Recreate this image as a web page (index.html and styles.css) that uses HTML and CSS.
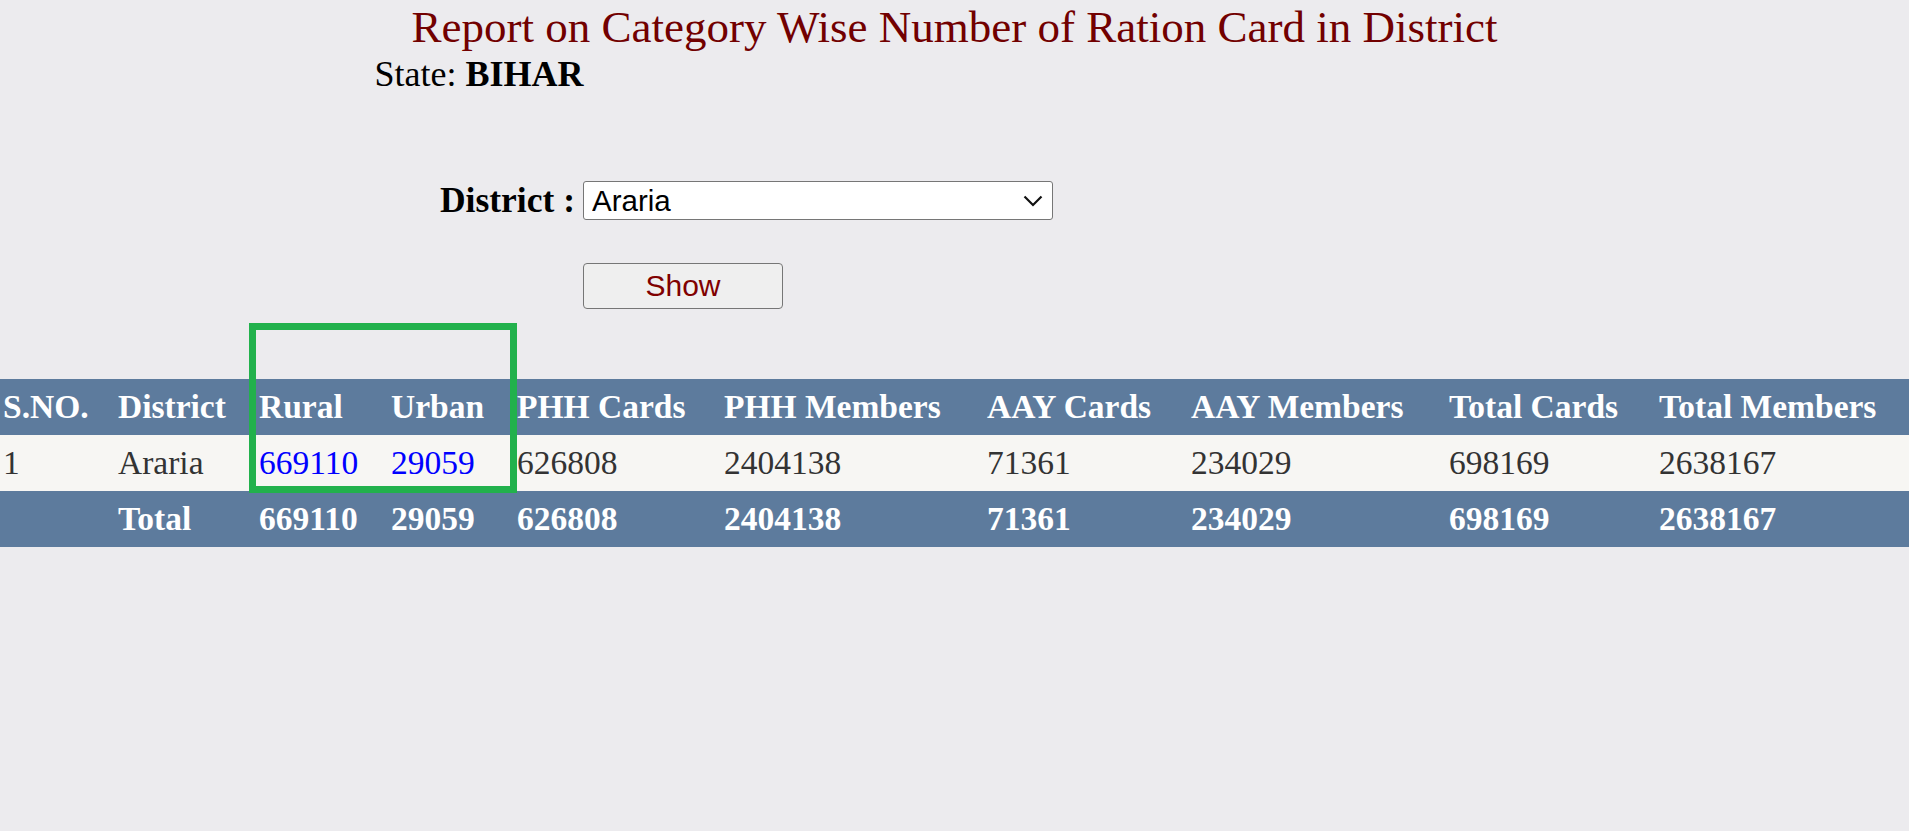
FILE: index.html
```html
<!DOCTYPE html>
<html>
<head>
<meta charset="utf-8">
<title>Report on Category Wise Number of Ration Card in District</title>
<link rel="stylesheet" href="styles.css">
</head>
<body>
<div class="head">
  <h1 class="title">Report on Category Wise Number of Ration Card in District</h1>
  <div class="state">State: <b>BIHAR</b></div>
</div>

<div class="form">
  <label class="label" for="district">District :</label>
  <div class="select-wrap">
    <select id="district" class="select">
      <option>Araria</option>
    </select>
    <svg class="chev" width="20" height="12" viewBox="0 0 20 12"><path d="M1.5 1.5 L10 10 L18.5 1.5" fill="none" stroke="#111" stroke-width="2.2"/></svg>
  </div>
  <span></span>
  <button class="btn" type="button">Show</button>
</div>

<div class="report">
  <table class="grid">
    <colgroup>
      <col class="c1"><col class="c2"><col class="c3"><col class="c4"><col class="c5">
      <col class="c6"><col class="c7"><col class="c8"><col class="c9"><col class="c10">
    </colgroup>
    <thead>
      <tr class="hdr">
        <th>S.NO.</th><th>District</th><th>Rural</th><th>Urban</th><th>PHH Cards</th>
        <th>PHH Members</th><th>AAY Cards</th><th>AAY Members</th><th>Total Cards</th><th>Total Members</th>
      </tr>
    </thead>
    <tbody>
      <tr class="row">
        <td>1</td><td>Araria</td><td><a href="#">669110</a></td><td><a href="#">29059</a></td><td>626808</td>
        <td>2404138</td><td>71361</td><td>234029</td><td>698169</td><td>2638167</td>
      </tr>
    </tbody>
    <tfoot>
      <tr class="ftr">
        <td></td><td>Total</td><td>669110</td><td>29059</td><td>626808</td>
        <td>2404138</td><td>71361</td><td>234029</td><td>698169</td><td>2638167</td>
      </tr>
    </tfoot>
  </table>
  <div class="mark"></div>
</div>
</body>
</html>
```

FILE: styles.css
```css
html, body {
  margin: 0;
  padding: 0;
}
body {
  background: #ecebee;
  font-family: "Liberation Serif", "Times New Roman", serif;
  color: #000;
  width: 1909px;
  min-height: 831px;
}
.head {
  width: 1160px;
  margin: 0 auto;
}
.title {
  margin: 0;
  padding-top: 1.5px;
  font-size: 45px;
  line-height: 50px;
  font-weight: normal;
  color: #720000;
  text-align: center;
}
.state {
  margin-top: 2px;
  font-size: 36px;
  line-height: 40px;
}
.form {
  display: grid;
  grid-template-columns: 575px 470px;
  column-gap: 8px;
  row-gap: 43px;
  margin-top: 87.5px;
  align-items: center;
}
.label {
  text-align: right;
  font-size: 35.5px;
  line-height: 39px;
  font-weight: bold;
}
.select-wrap {
  position: relative;
  height: 39px;
}
.select {
  -webkit-appearance: none;
  appearance: none;
  width: 470px;
  height: 39px;
  box-sizing: border-box;
  margin: 0;
  padding: 0 0 0 8px;
  background: #fff;
  border: 1.5px solid #767676;
  border-radius: 3px;
  font-family: "Liberation Sans", Arial, sans-serif;
  font-size: 29.5px;
  color: #000;
}
.chev {
  position: absolute;
  left: 440px;
  top: 14px;
  pointer-events: none;
}
.btn {
  width: 200px;
  height: 46px;
  box-sizing: border-box;
  margin: 0;
  padding: 0;
  background: #efefef;
  border: 1.5px solid #767676;
  border-radius: 4px;
  font-family: "Liberation Sans", Arial, sans-serif;
  font-size: 30px;
  color: #800000;
}
.report {
  position: relative;
  margin-top: 70px;
}
.grid {
  width: 1909px;
  border-collapse: collapse;
  table-layout: fixed;
  font-size: 33.5px;
}
.c1 { width: 115px; }
.c2 { width: 141px; }
.c3 { width: 132px; }
.c4 { width: 126px; }
.c5 { width: 207px; }
.c6 { width: 263px; }
.c7 { width: 204px; }
.c8 { width: 258px; }
.c9 { width: 210px; }
.c10 { width: 253px; }
.grid th, .grid td {
  height: 56px;
  padding: 0 0 0 3px;
  text-align: left;
  vertical-align: middle;
  white-space: nowrap;
}
.hdr, .ftr {
  background: #5d7b9d;
  color: #fff;
  font-weight: bold;
}
.row {
  background: #f7f6f3;
  color: #333;
}
.row a {
  color: #0000ff;
  text-decoration: none;
}
.mark {
  position: absolute;
  left: 249px;
  top: -56px;
  width: 268px;
  height: 170px;
  box-sizing: border-box;
  border: 7px solid #22b14c;
  pointer-events: none;
}
```
